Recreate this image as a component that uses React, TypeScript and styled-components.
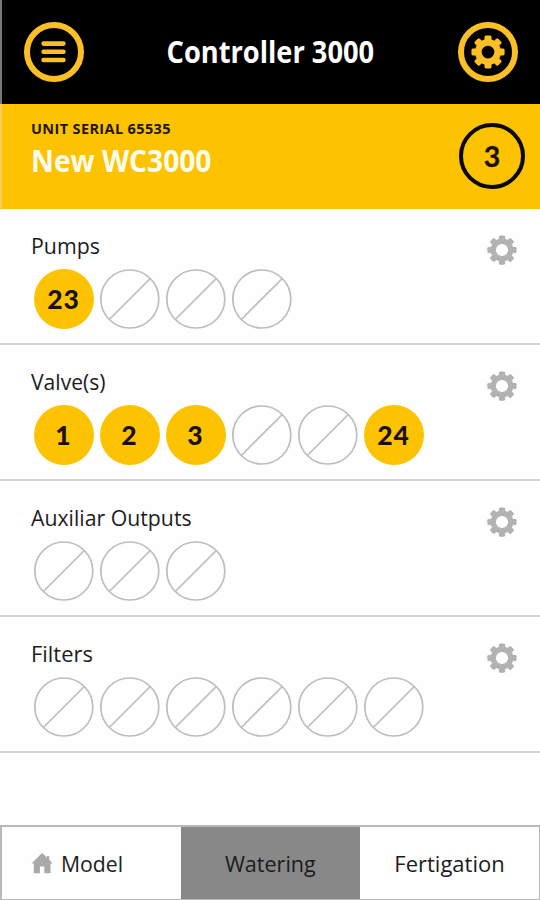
import React from "react";
import styled, { createGlobalStyle } from "styled-components";

const GlobalStyle = createGlobalStyle`
  * { box-sizing: border-box; }
  body { margin: 0; background: #fefefe; }
`;

const yellow = "#fdc300";
const amber = "#fcbf26";

const Screen = styled.main`
  width: 540px;
  height: 900px;
  display: flex;
  flex-direction: column;
  overflow: hidden;
  background: #fefefe;
  color: #1c1c1c;
  font-family: "Open Sans", "Noto Sans", sans-serif;
`;

const Header = styled.header`
  height: 104px;
  flex: none;
  display: flex;
  align-items: center;
  justify-content: space-between;
  padding: 0 22px 0 22px;
  border-left: 2px solid #777;
  background: #000;
`;

const RoundButton = styled.button`
  width: 60px;
  height: 60px;
  padding: 0;
  display: flex;
  align-items: center;
  justify-content: center;
  border: 6px solid ${amber};
  border-radius: 50%;
  background: transparent;
  color: ${amber};
`;

const Label = styled.span<{ $stretch?: number; $origin?: string }>`
  display: inline-block;
  white-space: nowrap;
  transform: scaleX(${(p) => p.$stretch ?? 1});
  transform-origin: ${(p) => p.$origin ?? "left"} center;
`;

const Title = styled.h1`
  margin: 0 2px 0 0;
  color: #fff;
  font-size: 30px;
  line-height: 40px;
  font-weight: 700;
`;

const UnitBar = styled.section`
  height: 105px;
  flex: none;
  display: flex;
  justify-content: space-between;
  padding: 14px 15px 0 29px;
  border-left: 2px solid #f3cf5a;
  background: ${yellow};
`;

const Serial = styled.div`
  height: 21px;
  font-size: 14.5px;
  line-height: 21px;
  font-weight: 700;
  letter-spacing: 0.37px;
  color: #251500;
`;

const UnitName = styled.div`
  height: 40px;
  font-size: 30px;
  line-height: 44px;
  font-weight: 700;
  color: #fffdf0;
`;

const Count = styled.div`
  width: 66px;
  height: 66px;
  margin-top: 5px;
  display: flex;
  align-items: center;
  justify-content: center;
  border: 4px solid #0a0800;
  border-radius: 50%;
  color: #1a1200;
  font: 700 28.5px/1 Lato, sans-serif;
  -webkit-text-stroke: 0.3px #1a1200;
`;

const Group = styled.section`
  height: 136px;
  flex: none;
  display: flex;
  justify-content: space-between;
  padding: 21px 23px 0 30.5px;
  border-bottom: 2px solid #d3d3d3;
`;

const GroupName = styled.h2`
  margin: 0;
  height: 39px;
  font-size: 22px;
  line-height: 30px;
  font-weight: 400;
`;

const Outputs = styled.div`
  display: flex;
  gap: 6px;
  padding-left: 3px;
`;

const Active = styled.div`
  width: 60px;
  height: 60px;
  display: flex;
  align-items: center;
  justify-content: center;
  border-radius: 50%;
  background: ${yellow};
  color: #1a1200;
  font: 900 26.5px/1 Lato, sans-serif;
  letter-spacing: 1px;
`;

const GearSlot = styled.div`
  padding-top: 5px;
`;

const Tabs = styled.nav`
  height: 75px;
  flex: none;
  margin-top: auto;
  display: grid;
  grid-template-columns: repeat(3, 1fr);
  border: 2px solid #b9b9b9;
  border-bottom-width: 1px;
  border-right-width: 1px;
`;

const Tab = styled.button<{ $selected?: boolean; $start?: boolean }>`
  display: flex;
  align-items: center;
  justify-content: ${(p) => (p.$start ? "flex-start" : "center")};
  gap: 8px;
  border: 0;
  padding: 0 0 0 ${(p) => (p.$start ? "29px" : "0")};
  font: 400 22px/30px "Open Sans", sans-serif;
  color: #1c1c1c;
  background: ${(p) => (p.$selected ? "#888" : "#fefefe")};
`;

const Icon = styled.svg`
  display: block;
  flex: none;
`;

const teeth = [0, 45, 90, 135, 180, 225, 270, 315];

const Gear = ({ size, color, hole }: { size: number; color: string; hole: number }) => (
  <Icon width={size} height={size} viewBox="0 0 32 32" fill={color}>
    {teeth.map((angle) => (
      <rect key={angle} x="12.7" y="0.4" width="6.6" height="7" rx="1.4" transform={`rotate(${angle} 16 16)`} />
    ))}
    <circle cx="16" cy="16" r={(12.2 + hole) / 2} fill="none" stroke={color} strokeWidth={12.2 - hole} />
  </Icon>
);

const MenuIcon = () => (
  <Icon width="26" height="24" viewBox="0 0 26 24">
    <g stroke={amber} strokeWidth="4.6" strokeLinecap="round">
      <path d="M2.6 3.6H22.4M2.6 11.8H22.4M2.6 20H22.4" />
    </g>
  </Icon>
);

const Empty = () => (
  <Icon width="60" height="60" viewBox="0 0 60 60" fill="none" stroke="#bdbdbd" strokeWidth="1.7">
    <circle cx="29.8" cy="30" r="29" />
    <path d="M9.3 50.5L50.3 9.5" />
  </Icon>
);

const HomeIcon = () => (
  <Icon width="22" height="21" viewBox="0 0 22 21" fill="#a9a9a9">
    <path d="M11 0L16 4.4V3H18.2V6.4L21.5 10.5H19.5V20.3H13.3V13.5H8.9V20.3H2.8V10.5H0.5Z" />
  </Icon>
);

const groups: { name: string; stretch: number; slots: (number | null)[] }[] = [
  { name: "Pumps", stretch: 0.97, slots: [23, null, null, null] },
  { name: "Valve(s)", stretch: 0.96, slots: [1, 2, 3, null, null, 24] },
  { name: "Auxiliar Outputs", stretch: 0.966, slots: [null, null, null] },
  { name: "Filters", stretch: 0.995, slots: [null, null, null, null, null, null] },
];

export default function App() {
  return (
    <Screen>
      <GlobalStyle />
      <Header>
        <RoundButton aria-label="Menu"><MenuIcon /></RoundButton>
        <Title><Label $origin="center" $stretch={0.908}>Controller 3000</Label></Title>
        <RoundButton aria-label="Settings"><Gear size={34} color={amber} hole={6} /></RoundButton>
      </Header>
      <UnitBar>
        <div>
          <Serial><Label>UNIT SERIAL 65535</Label></Serial>
          <UnitName><Label $stretch={0.938}>New WC3000</Label></UnitName>
        </div>
        <Count>3</Count>
      </UnitBar>
      {groups.map((group) => (
        <Group key={group.name}>
          <div>
            <GroupName><Label $stretch={group.stretch}>{group.name}</Label></GroupName>
            <Outputs>
              {group.slots.map((n, i) => (n === null ? <Empty key={i} /> : <Active key={i}>{n}</Active>))}
            </Outputs>
          </div>
          <GearSlot><Gear size={30} color="#b2b2b2" hole={6.5} /></GearSlot>
        </Group>
      ))}
      <Tabs>
        <Tab $start><HomeIcon /><Label $stretch={0.965}>Model</Label></Tab>
        <Tab $selected><Label $origin="center" $stretch={0.98}>Watering</Label></Tab>
        <Tab><Label>Fertigation</Label></Tab>
      </Tabs>
    </Screen>
  );
}
